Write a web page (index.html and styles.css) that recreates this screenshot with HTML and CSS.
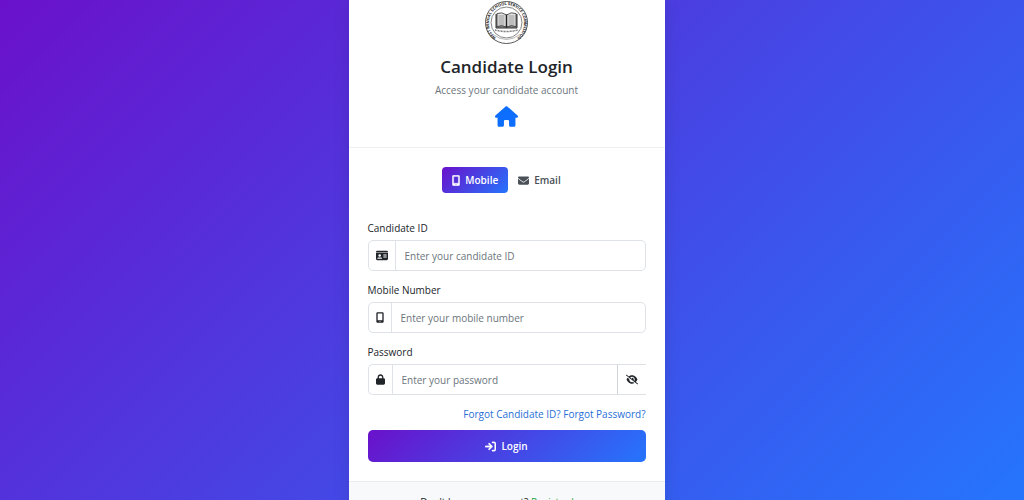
FILE: index.html
```html
<!DOCTYPE html>
<html lang="en">
<head>
    <meta charset="UTF-8">
    <meta name="viewport" content="width=device-width, initial-scale=1.0">
    <title>Candidate Login</title>
    <link rel="stylesheet" href="styles.css">
</head>
<body>

<main class="login-card">
    <header class="login-header">
        <svg class="logo" viewBox="0 0 86 86" role="img" aria-label="Commission seal">
            <defs>
                <path id="sealArc" d="M20.400 73.900 A36 36 0 0 1 7 43 A36 36 0 0 1 79 43 A36 36 0 0 1 65.600 73.900" transform="translate(1.300 1.300) scale(.97)"/>
            </defs>
            <circle cx="43" cy="43" r="42" fill="#fff" stroke="#444" stroke-width="1.800"/>
            <circle cx="43" cy="43" r="31" fill="#fff" stroke="#666" stroke-width="1.600"/>
            <text class="seal-text"><textPath href="#sealArc" startOffset="50%" text-anchor="middle">WEST BENGAL SCHOOL SERVICE COMMISSION</textPath></text>
            <path d="M22 26 V54 H64 V26" fill="#888" stroke="#333" stroke-width="2"/>
            <path d="M43 28 Q34 21 24 25 V51 Q34 47 43 52 Q52 47 62 51 V25 Q52 21 43 28 Z" fill="#e4e4e4" stroke="#333" stroke-width="1.600"/>
            <path d="M43 28 V53" stroke="#222" stroke-width="3"/>
            <path d="M27 30 H39 M27 34 H39 M27 38 H39 M27 42 H39 M27 46 H39 M47 30 H59 M47 34 H59 M47 38 H59 M47 42 H59 M47 46 H59" stroke="#777" stroke-width="1.400"/>
            <path d="M20 58 Q43 64 66 58" fill="none" stroke="#777" stroke-width="3" stroke-dasharray="2 1"/>
            <path d="M16 67 Q43 87 70 67" fill="none" stroke="#999" stroke-width="1.400"/>
        </svg>
        <h1>Candidate Login</h1>
        <p>Access your candidate account</p>
        <a href="#" class="home-link" aria-label="Home">
            <svg viewBox="0 0 576 512"><path d="M575.8 255.500c0 18-15 32.100-32 32.100h-32l.7 160.200c0 2.700-.2 5.400-.5 8.100V472c0 22.100-17.900 40-40 40H392c-22.100 0-40-17.900-40-40V376c0-17.700-14.300-32-32-32H256c-17.700 0-32 14.300-32 32v96c0 22.100-17.900 40-40 40H104c-22.100 0-40-17.900-40-40V287.600H32c-18 0-32-14-32-32.100 0-9 3-17 10-24L266.400 8c7-7 15-8 22-8s15 2 21 7L564.800 231.500c8 7 12 15 11 24z"/></svg>
        </a>
    </header>

    <form class="login-form" action="#" method="post">
        <div class="login-tabs">
            <button type="button" class="tab active">
                <svg class="icon narrow" viewBox="0 0 384 512"><path fill-rule="evenodd" stroke="currentColor" stroke-width="16" d="M80 0H304C342 0 368 26 368 64V448C368 486 342 512 304 512H80C42 512 16 486 16 448V64C16 26 42 0 80 0ZM80 64V384H304V64ZM160 432H224V464H160Z"/></svg>
                Mobile
            </button>
            <button type="button" class="tab">
                <svg class="icon" viewBox="0 0 512 512"><path d="M48 64C21.500 64 0 85.500 0 112c0 15.100 7.100 29.300 19.200 38.400L236.800 313.600c11.400 8.500 27 8.500 38.400 0L492.800 150.400c12.100-9.100 19.200-23.300 19.200-38.400 0-26.500-21.500-48-48-48H48zM0 176V384c0 35.300 28.700 64 64 64H448c35.300 0 64-28.700 64-64V176L294.400 339.200c-22.800 17.100-54 17.100-76.800 0L0 176z"/></svg>
                Email
            </button>
        </div>

        <div class="form-group">
            <label for="candidateId">Candidate ID</label>
            <div class="input-group">
                <span class="input-icon">
                    <svg class="icon wide" viewBox="0 0 576 512"><path fill-rule="evenodd" d="M0 96C0 60 28 32 64 32H512C548 32 576 60 576 96H0ZM0 128H576V416C576 452 548 480 512 480H64C28 480 0 452 0 416ZM64 405C64 412 68 416 75 416H277C284 416 288 412 288 405C288 376 264 352 235 352H117C88 352 64 376 64 405ZM176 320A64 64 0 1 0 176 192A64 64 0 1 0 176 320ZM352 192V224H512V192ZM352 256V288H512V256ZM352 320V352H512V320Z"/></svg>
                </span>
                <input type="text" id="candidateId" name="candidateId" placeholder="Enter your candidate ID">
            </div>
        </div>

        <div class="form-group">
            <label for="mobileNumber">Mobile Number</label>
            <div class="input-group">
                <span class="input-icon">
                    <svg class="icon narrow" viewBox="0 0 384 512"><path fill-rule="evenodd" d="M80 0H304C342 0 368 26 368 64V448C368 486 342 512 304 512H80C42 512 16 486 16 448V64C16 26 42 0 80 0ZM80 64V384H304V64ZM160 432H224V464H160Z"/></svg>
                </span>
                <input type="tel" id="mobileNumber" name="mobileNumber" placeholder="Enter your mobile number">
            </div>
        </div>

        <div class="form-group">
            <label for="password">Password</label>
            <div class="input-group password-group">
                <span class="input-icon">
                    <svg class="icon lock" viewBox="0 0 448 512"><path fill-rule="evenodd" d="M144 144v48H304V144c0-44.200-35.800-80-80-80s-80 35.800-80 80zM80 192V144C80 64.500 144.500 0 224 0s144 64.500 144 144v48h16c35.300 0 64 28.700 64 64V448c0 35.300-28.700 64-64 64H64c-35.300 0-64-28.700-64-64V256c0-35.300 28.700-64 64-64H80z"/></svg>
                </span>
                <input type="password" id="password" name="password" placeholder="Enter your password">
                <button type="button" class="toggle-password" id="togglePassword" aria-label="Show password">
                    <svg class="icon wide" viewBox="0 0 640 512"><path d="M38.800 5.100C28.400-3.100 13.300-1.200 5.100 9.200S-1.200 34.700 9.200 42.900l592 464c10.400 8.200 25.500 6.300 33.700-4.100s6.300-25.500-4.100-33.700L525.600 386.700c39.600-40.600 66.400-86.100 79.900-118.400 3.300-7.900 3.300-16.700 0-24.600-14.900-35.700-46.200-87.700-93-131.100C465.500 68.800 400.800 32 320 32c-68.200 0-125 26.300-169.300 60.800L38.800 5.100zM223.100 149.500C248.600 126.200 282.700 112 320 112c79.500 0 144 64.500 144 144 0 24.900-6.300 48.300-17.400 68.700L408 294.500c8.400-19.300 10.600-41.400 4.800-63.300-11.100-41.500-47.800-69.400-88.600-71.100-5.800-.2-9.200 6.100-7.400 11.700 2.100 6.400 3.300 13.200 3.300 20.300 0 10.200-2.400 19.800-6.600 28.300l-90.300-70.800zM373 389.900c-16.400 6.500-34.300 10.100-53 10.100-79.500 0-144-64.500-144-144 0-6.900.5-13.600 1.400-20.200L83.100 161.500C60.300 191.200 44 220.800 34.500 243.700c-3.300 7.900-3.300 16.700 0 24.600 14.900 35.700 46.200 87.700 93 131.100C174.500 443.200 239.200 480 320 480c47.800 0 89.900-12.900 126.200-32.500L373 389.900z"/></svg>
                </button>
            </div>
        </div>

        <div class="forgot-links">
            <a href="#">Forgot Candidate ID?</a>
            <a href="#">Forgot Password?</a>
        </div>

        <button type="submit" class="login-button">
            <svg class="icon" viewBox="0 0 512 512"><path stroke="currentColor" stroke-width="16" d="M352 96h64c17.700 0 32 14.300 32 32V384c0 17.700-14.300 32-32 32H352c-17.700 0-32 14.300-32 32s14.300 32 32 32h64c53 0 96-43 96-96V128c0-53-43-96-96-96H352c-17.700 0-32 14.300-32 32s14.300 32 32 32zM342.600 278.600c12.500-12.500 12.500-32.800 0-45.300l-128-128c-12.500-12.500-32.800-12.500-45.300 0s-12.500 32.800 0 45.300L242.700 224H32c-17.700 0-32 14.300-32 32s14.300 32 32 32H242.700l-73.400 73.400c-12.500 12.500-12.500 32.800 0 45.300s32.800 12.500 45.300 0l128-128z"/></svg>
            Login
        </button>
    </form>

    <footer class="login-footer">
        Don't have an account? <a href="#">Register here</a>
    </footer>
</main>

<script>
    document.getElementById('togglePassword').addEventListener('click', function() {
        const password = document.getElementById('password');
        password.type = password.type === 'password' ? 'text' : 'password';
    });
</script>

</body>
</html>
```

FILE: styles.css
```css
* {
    box-sizing: border-box;
}
html {
    height: 100%;
}
body {
    font-family: "Segoe UI", "Open Sans", "Noto Sans", sans-serif;
    font-size: 10px;
    line-height: 16px;
    color: #212529;
    margin: 0;
    padding-right: 11px;
    height: 100%;
    overflow: hidden;
    background: linear-gradient(135deg, #6a11cb 0%, #2575fc 100%);
}
a {
    text-decoration: none;
}
button,
input {
    font-family: inherit;
    font-size: inherit;
    line-height: inherit;
}
svg {
    display: block;
    fill: currentColor;
}
.login-card {
    max-width: 316px;
    margin: 0 auto;
    background: white;
    box-shadow: 0 0 16px rgba(0, 0, 0, 0.1);
}
.login-header {
    display: flex;
    flex-direction: column;
    align-items: center;
    padding: 1px 20px 20px;
    border-bottom: 1px solid #eef0f2;
}
.logo {
    width: 43px;
    height: 43px;
}
.seal-text {
    font-size: 8px;
    font-weight: bold;
    fill: #222;
}
.login-header h1 {
    margin: 12px 0 4px;
    font-size: 17px;
    line-height: 22px;
    font-weight: 600;
}
.login-header p {
    margin: 0 0 8px;
    color: #6c757d;
}
.home-link {
    color: #0d6efd;
}
.home-link svg {
    width: 23px;
    height: 21px;
}
.login-form {
    padding: 19px;
}
.login-tabs {
    display: flex;
    justify-content: center;
    margin-bottom: 27px;
}
.tab {
    display: flex;
    align-items: center;
    gap: 5px;
    height: 26px;
    padding: 0 10px;
    border: none;
    border-radius: 4px;
    background: none;
    color: #495057;
    font-weight: 600;
    cursor: pointer;
}
.tab.active,
.login-button {
    background: linear-gradient(135deg, #6a11cb 0%, #2575fc 100%);
    color: white;
}
.icon {
    width: 11px;
    height: 11px;
}
.icon.narrow {
    width: 8px;
}
.icon.lock {
    width: 9px;
}
.icon.wide {
    width: 12px;
}
.form-group {
    margin-bottom: 11px;
}
.form-group label {
    display: block;
    margin-bottom: 4px;
}
.input-group {
    display: flex;
    height: 31px;
    border: 1px solid #dee2e6;
    border-radius: 5px;
}
.password-group {
    border-right: none;
    border-radius: 5px 0 0 5px;
}
.input-icon {
    display: flex;
    align-items: center;
    padding: 0 7px;
    border-right: 1px solid #dee2e6;
}
.input-group input {
    flex: 1;
    min-width: 0;
    padding: 0 9px;
    border: none;
    border-radius: 5px;
    background: none;
    color: #212529;
}
.input-group input::placeholder {
    color: #6c757d;
}
.toggle-password {
    display: flex;
    align-items: center;
    padding: 0 8px;
    border: none;
    border-left: 1px solid #ced4da;
    background: none;
    color: #212529;
    cursor: pointer;
}
.forgot-links {
    margin-bottom: 8px;
    text-align: right;
}
.forgot-links a {
    color: #1f6fd6;
}
.login-button {
    display: flex;
    align-items: center;
    justify-content: center;
    gap: 5px;
    width: 100%;
    height: 32px;
    border: none;
    border-radius: 5px;
    font-weight: 600;
    cursor: pointer;
}
.login-footer {
    padding: 12px 19px;
    border-top: 1px solid #e9ecef;
    background: #f8f9fa;
    text-align: center;
}
.login-footer a {
    color: #28a745;
}
```
